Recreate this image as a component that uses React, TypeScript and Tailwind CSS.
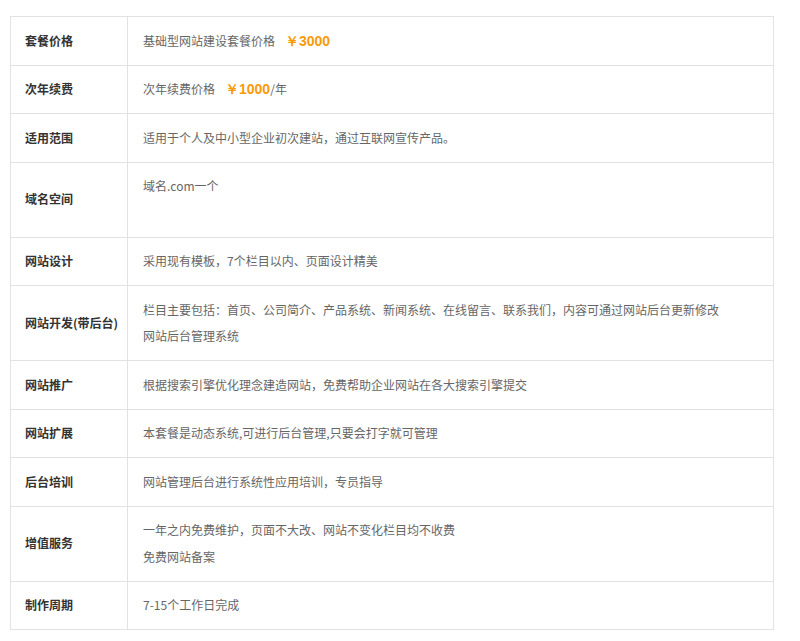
import React from "react";

const labelCls =
  "w-[117px] whitespace-nowrap border border-[#e2e2e2] pl-[14px] pr-[8px] py-[10.5px] align-middle text-left text-[12px] font-bold leading-[26.5px] text-[#333]";
const valueCls =
  "border border-[#e2e2e2] px-[15px] py-[10.5px] align-middle text-left text-[12px] leading-[26.5px] text-[#666]";

type Row = { label: string; lines: React.ReactNode[] };

const rows: Row[] = [
  {
    label: "套餐价格",
    lines: [
      <span key="a">
        基础型网站建设套餐价格
        <span className="ml-[10px] font-['Liberation_Sans',sans-serif] text-[14px] font-bold text-[#f99a0b]">
          ￥3000
        </span>
      </span>,
    ],
  },
  {
    label: "次年续费",
    lines: [
      <span key="a">
        次年续费价格
        <span className="ml-[10px] font-['Liberation_Sans',sans-serif] text-[14px] font-bold text-[#f99a0b]">
          ￥1000
        </span>
        /年
      </span>,
    ],
  },
  { label: "适用范围", lines: ["适用于个人及中小型企业初次建站，通过互联网宣传产品。"] },
  { label: "域名空间", lines: ["域名.com一个", "\u00a0"] },
  { label: "网站设计", lines: ["采用现有模板，7个栏目以内、页面设计精美"] },
  {
    label: "网站开发(带后台)",
    lines: [
      "栏目主要包括：首页、公司简介、产品系统、新闻系统、在线留言、联系我们，内容可通过网站后台更新修改",
      "网站后台管理系统",
    ],
  },
  { label: "网站推广", lines: ["根据搜索引擎优化理念建造网站，免费帮助企业网站在各大搜索引擎提交"] },
  { label: "网站扩展", lines: ["本套餐是动态系统,可进行后台管理,只要会打字就可管理"] },
  { label: "后台培训", lines: ["网站管理后台进行系统性应用培训，专员指导"] },
  {
    label: "增值服务",
    lines: ["一年之内免费维护，页面不大改、网站不变化栏目均不收费", "免费网站备案"],
  },
  { label: "制作周期", lines: ["7-15个工作日完成"] },
];

export default function App() {
  return (
    <div className="min-h-[641px] w-[800px] bg-white pl-[10px] pt-[16px] font-['Noto_Sans_CJK_SC',sans-serif]">
      <table className="w-[764px] table-fixed border-collapse bg-white">
        <colgroup>
          <col className="w-[117px]" />
          <col />
        </colgroup>
        <tbody>
          {rows.map((r) => (
            <tr key={r.label}>
              <td className={labelCls}>{r.label}</td>
              <td className={valueCls}>
                {r.lines.map((l, i) => (
                  <div key={i}>{l}</div>
                ))}
              </td>
            </tr>
          ))}
        </tbody>
      </table>
    </div>
  );
}
